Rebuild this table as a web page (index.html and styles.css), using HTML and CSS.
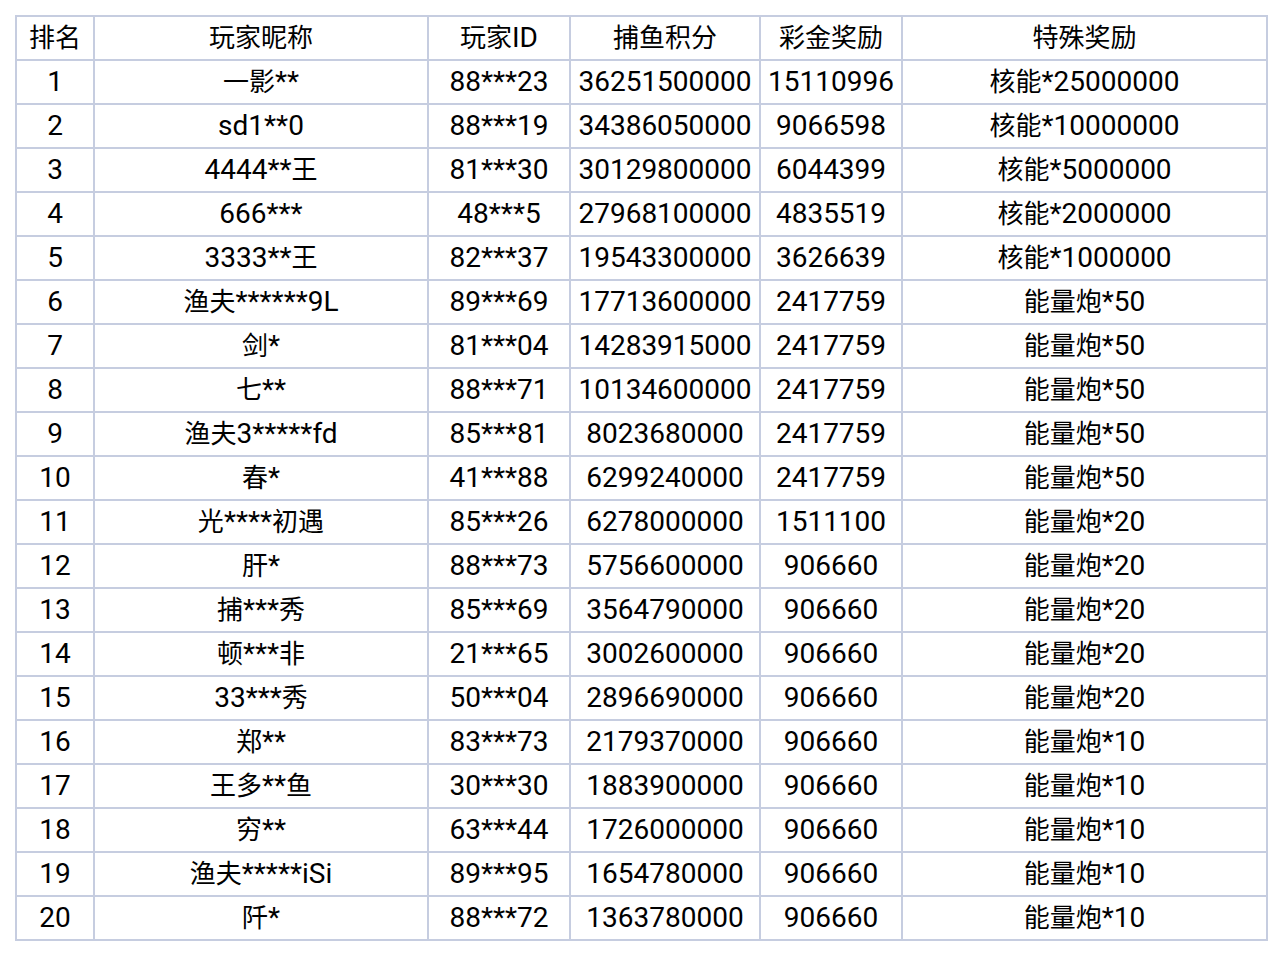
FILE: index.html
```html
<!DOCTYPE html>
<html lang="zh-CN">
<head>
<meta charset="utf-8">
<title>捕鱼排行榜</title>
<link rel="stylesheet" href="styles.css">
</head>
<body>
<table class="rank">
<colgroup>
<col class="c-rank"><col class="c-name"><col class="c-id"><col class="c-score"><col class="c-bonus"><col class="c-special">
</colgroup>
<thead>
<tr><th><span class="zh">排名</span></th><th><span class="zh">玩家昵称</span></th><th><span class="zh">玩家</span>ID</th><th><span class="zh">捕鱼积分</span></th><th><span class="zh">彩金奖励</span></th><th><span class="zh">特殊奖励</span></th></tr>
</thead>
<tbody>
<tr><td>1</td><td><span class="zh">一影</span>**</td><td>88***23</td><td>36251500000</td><td>15110996</td><td><span class="zh">核能</span>*25000000</td></tr>
<tr><td>2</td><td>sd1**0</td><td>88***19</td><td>34386050000</td><td>9066598</td><td><span class="zh">核能</span>*10000000</td></tr>
<tr><td>3</td><td>4444**<span class="zh">王</span></td><td>81***30</td><td>30129800000</td><td>6044399</td><td><span class="zh">核能</span>*5000000</td></tr>
<tr><td>4</td><td>666***</td><td>48***5</td><td>27968100000</td><td>4835519</td><td><span class="zh">核能</span>*2000000</td></tr>
<tr><td>5</td><td>3333**<span class="zh">王</span></td><td>82***37</td><td>19543300000</td><td>3626639</td><td><span class="zh">核能</span>*1000000</td></tr>
<tr><td>6</td><td><span class="zh">渔夫</span>******9L</td><td>89***69</td><td>17713600000</td><td>2417759</td><td><span class="zh">能量炮</span>*50</td></tr>
<tr><td>7</td><td><span class="zh">剑</span>*</td><td>81***04</td><td>14283915000</td><td>2417759</td><td><span class="zh">能量炮</span>*50</td></tr>
<tr><td>8</td><td><span class="zh">七</span>**</td><td>88***71</td><td>10134600000</td><td>2417759</td><td><span class="zh">能量炮</span>*50</td></tr>
<tr><td>9</td><td><span class="zh">渔夫</span>3*****fd</td><td>85***81</td><td>8023680000</td><td>2417759</td><td><span class="zh">能量炮</span>*50</td></tr>
<tr><td>10</td><td><span class="zh">春</span>*</td><td>41***88</td><td>6299240000</td><td>2417759</td><td><span class="zh">能量炮</span>*50</td></tr>
<tr><td>11</td><td><span class="zh">光</span>****<span class="zh">初遇</span></td><td>85***26</td><td>6278000000</td><td>1511100</td><td><span class="zh">能量炮</span>*20</td></tr>
<tr><td>12</td><td><span class="zh">肝</span>*</td><td>88***73</td><td>5756600000</td><td>906660</td><td><span class="zh">能量炮</span>*20</td></tr>
<tr><td>13</td><td><span class="zh">捕</span>***<span class="zh">秀</span></td><td>85***69</td><td>3564790000</td><td>906660</td><td><span class="zh">能量炮</span>*20</td></tr>
<tr><td>14</td><td><span class="zh">顿</span>***<span class="zh">非</span></td><td>21***65</td><td>3002600000</td><td>906660</td><td><span class="zh">能量炮</span>*20</td></tr>
<tr><td>15</td><td>33***<span class="zh">秀</span></td><td>50***04</td><td>2896690000</td><td>906660</td><td><span class="zh">能量炮</span>*20</td></tr>
<tr><td>16</td><td><span class="zh">郑</span>**</td><td>83***73</td><td>2179370000</td><td>906660</td><td><span class="zh">能量炮</span>*10</td></tr>
<tr><td>17</td><td><span class="zh">王多</span>**<span class="zh">鱼</span></td><td>30***30</td><td>1883900000</td><td>906660</td><td><span class="zh">能量炮</span>*10</td></tr>
<tr><td>18</td><td><span class="zh">穷</span>**</td><td>63***44</td><td>1726000000</td><td>906660</td><td><span class="zh">能量炮</span>*10</td></tr>
<tr><td>19</td><td><span class="zh">渔夫</span>*****iSi</td><td>89***95</td><td>1654780000</td><td>906660</td><td><span class="zh">能量炮</span>*10</td></tr>
<tr><td>20</td><td><span class="zh">阡</span>*</td><td>88***72</td><td>1363780000</td><td>906660</td><td><span class="zh">能量炮</span>*10</td></tr>
</tbody>
</table>
</body>
</html>
```
FILE: styles.css
```css
html, body {
  margin: 0;
  padding: 0;
  background: #ffffff;
}
body {
  padding: 15px 0 0 15px;
  font-family: Roboto, "Noto Sans CJK SC", sans-serif;
  color: #000000;
}
.rank {
  border-collapse: collapse;
  table-layout: fixed;
  width: 1253px;
  font-size: 28px;
}
.c-rank { width: 78px; }
.c-name { width: 334px; }
.c-id { width: 142px; }
.c-score { width: 190px; }
.c-bonus { width: 142px; }
.c-special { width: 365px; }
.rank th,
.rank td {
  border: 2px solid #c6cde0;
  height: 42px;
  padding: 0;
  text-align: center;
  vertical-align: middle;
  font-weight: normal;
  line-height: 42px;
  white-space: nowrap;
  overflow: hidden;
}
.zh {
  font-family: "Noto Sans CJK SC", sans-serif;
  font-size: 26px;
  line-height: 1;
}
```
